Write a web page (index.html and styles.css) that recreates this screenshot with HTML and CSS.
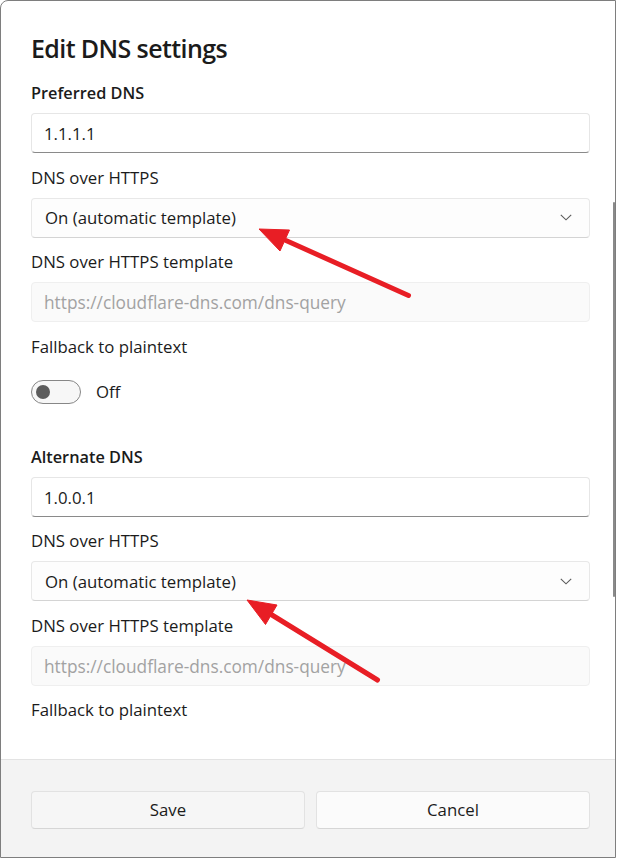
FILE: index.html
```html
<!DOCTYPE html>
<html lang="en">
<head>
<meta charset="utf-8">
<title>Edit DNS settings</title>
<link rel="stylesheet" href="styles.css">
</head>
<body>
<div class="window">
  <div class="content">
    <h1 class="title">Edit DNS settings</h1>

    <div class="label strong first">Preferred DNS</div>
    <div class="field textbox">1.1.1.1</div>
    <div class="label">DNS over HTTPS</div>
    <div class="field combo"><span>On (automatic template)</span>
      <svg class="chev" width="12" height="7" viewBox="0 0 12 7"><path d="M0.8 0.8 L6 5.8 L11.2 0.8" fill="none" stroke="#5a5a5a" stroke-width="1.1"/></svg>
    </div>
    <div class="label">DNS over HTTPS template</div>
    <div class="field disabled">https://cloudflare-dns.com/dns-query</div>
    <div class="label">Fallback to plaintext</div>
    <div class="toggle-row">
      <div class="toggle"><div class="knob"></div></div>
      <span class="toggle-text">Off</span>
    </div>

    <div class="label strong section">Alternate DNS</div>
    <div class="field textbox">1.0.0.1</div>
    <div class="label">DNS over HTTPS</div>
    <div class="field combo"><span>On (automatic template)</span>
      <svg class="chev" width="12" height="7" viewBox="0 0 12 7"><path d="M0.8 0.8 L6 5.8 L11.2 0.8" fill="none" stroke="#5a5a5a" stroke-width="1.1"/></svg>
    </div>
    <div class="label">DNS over HTTPS template</div>
    <div class="field disabled">https://cloudflare-dns.com/dns-query</div>
    <div class="label">Fallback to plaintext</div>
  </div>
  <div class="footer">
    <button class="btn save">Save</button>
    <button class="btn cancel">Cancel</button>
  </div>
  <div class="scrollbar"></div>
</div>
<svg class="arrows" width="617" height="859" viewBox="0 0 617 859">
  <g fill="#e81e25" stroke="#e81e25">
    <line x1="408.5" y1="295.5" x2="286" y2="240.5" stroke-width="5" stroke-linecap="round"/>
    <polygon points="259,229 289.5,230 280,251" stroke-width="1" stroke-linejoin="round"/>
    <line x1="377.5" y1="680" x2="272" y2="615" stroke-width="5" stroke-linecap="round"/>
    <polygon points="247,600 277,605 265.5,624.5" stroke-width="1" stroke-linejoin="round"/>
  </g>
</svg>
</body>
</html>
```

FILE: styles.css
```css
html, body {
  margin: 0;
  padding: 0;
  background: #ffffff;
}

body {
  font-family: "Open Sans", "Noto Sans", sans-serif;
  color: #1b1b1b;
  width: 617px;
  height: 859px;
  overflow: hidden;
}

.window {
  position: relative;
  width: 614px;
  height: 856px;
  border: 1px solid #7e7e7e;
  border-top-left-radius: 8px;
  overflow: hidden;
  display: flex;
  flex-direction: column;
  background: #ffffff;
}

.content {
  flex: 1;
  padding: 29px 25px 0 30px;
  display: flex;
  flex-direction: column;
}

.title {
  margin: 0;
  font-size: 25px;
  font-weight: 600;
  line-height: 36px;
  height: 36px;
  letter-spacing: -0.6px;
}

.label {
  font-size: 16.8px;
  line-height: 24px;
  height: 24px;
  margin-top: 12.5px;
  margin-bottom: 8px;
  white-space: nowrap;
}

.label.strong {
  font-weight: 600;
  font-size: 16.3px;
}

.label.first {
  margin-top: 15px;
}

.label.section {
  margin-top: 41px;
}

.field {
  box-sizing: border-box;
  height: 40px;
  border-radius: 4px;
  padding: 1px 12px 0;
  display: flex;
  align-items: center;
  font-size: 16.8px;
  white-space: nowrap;
}

.textbox {
  border: 1px solid #e6e6e6;
  border-bottom: 1px solid #8a8a8a;
  background: #ffffff;
}

.combo {
  border: 1px solid #e8e8e8;
  border-bottom-color: #d4d4d4;
  background: #fdfdfd;
  justify-content: space-between;
  padding-top: 0;
  padding-left: 13px;
  padding-right: 17px;
}

.chev {
  display: block;
}

.disabled {
  border: 1px solid #efefef;
  background: #fafafa;
  color: #a2a2a2;
  font-size: 17.3px;
}

.toggle-row {
  margin-top: 13px;
  display: flex;
  align-items: center;
  height: 24px;
}

.toggle {
  box-sizing: border-box;
  width: 50px;
  height: 24px;
  border: 1px solid #878787;
  border-radius: 12px;
  background: #f7f7f7;
  display: flex;
  align-items: center;
  padding-left: 4px;
}

.knob {
  width: 14px;
  height: 14px;
  border-radius: 50%;
  background: #5c5c5c;
}

.toggle-text {
  margin-left: 15px;
  font-size: 16.8px;
  line-height: 24px;
}

.footer {
  height: 98px;
  box-sizing: border-box;
  border-top: 1px solid #e3e3e3;
  background: #f3f3f3;
  padding: 31px 25px 0 30px;
  display: flex;
  gap: 11px;
}

.btn {
  flex: 1;
  height: 38px;
  box-sizing: border-box;
  border: 1px solid #e2e2e2;
  border-bottom-color: #d6d6d6;
  border-radius: 4px;
  font-family: "Open Sans", "Noto Sans", sans-serif;
  font-size: 16.8px;
  color: #1b1b1b;
  padding: 0 0 1px;
}

.btn.save {
  background: #f6f6f6;
}

.btn.cancel {
  background: #fbfbfb;
}

.scrollbar {
  position: absolute;
  right: 0;
  top: 201px;
  width: 2px;
  height: 395px;
  border-radius: 1px;
  background: #8a8a8a;
}

.arrows {
  position: absolute;
  left: 0;
  top: 0;
  pointer-events: none;
}
```
